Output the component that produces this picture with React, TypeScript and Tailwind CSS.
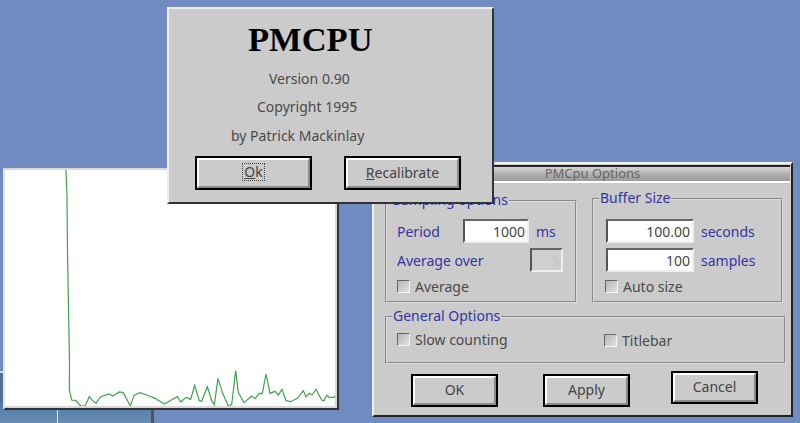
const RAW: [number, number][] = [
  [28, 90], [35, 120], [48, 122], [62, 138], [75, 138], [88, 110], [98, 122], [108, 130], [122, 110], [135, 106],
  [147, 102], [158, 108], [178, 96], [190, 98], [211, 138], [222, 106], [240, 98], [260, 105], [285, 115], [313, 132],
  [330, 122], [352, 110], [362, 126], [378, 112], [392, 118], [404, 76], [418, 122], [425, 124], [442, 80], [455, 122],
  [463, 134], [474, 55], [488, 100], [505, 138], [515, 134], [527, 32], [535, 98], [552, 128], [575, 108], [585, 116],
  [598, 100], [607, 100], [618, 42], [630, 100], [645, 94], [655, 105], [666, 88], [678, 122], [692, 125], [712, 115],
  [730, 92], [738, 110], [748, 100], [756, 105], [768, 88], [785, 120], [792, 122], [800, 106], [808, 112], [822, 112],
  [828, 104],
];

// svg origin is the inside of the graph window (5,170)
const tail = RAW.map(([x, y]) => `${60 + x / 3 - 5},${360 + y / 3 - 170}`).join(" ");
const points = `61,0 62,27 62.5,82 63.5,137 64.5,194 ${tail}`;

function RaisedButton({
  children,
  className = "",
}: {
  children: React.ReactNode;
  className?: string;
}) {
  return (
    <div className={`border-2 border-black bg-[#cbcbcb] ${className}`}>
      <div className="flex h-full items-center justify-center border-2 border-t-white border-l-white border-r-[#8a8a8a] border-b-[#8a8a8a] pb-0.5 text-[14px] text-[#444]">
        {children}
      </div>
    </div>
  );
}

function Field({
  value,
  className = "",
  disabled = false,
}: {
  value: string;
  className?: string;
  disabled?: boolean;
}) {
  return (
    <div
      className={`flex h-6 items-center justify-end border-2 border-t-[#666] border-l-[#555] border-r-[#eee] border-b-[#eee] pr-0.5 text-[14px] ${
        disabled ? "bg-[#cfcfcf] text-[#c4c4c4]" : "bg-white text-[#444]"
      } ${className}`}
    >
      {value}
    </div>
  );
}

function Check({ label, className = "" }: { label: string; className?: string }) {
  return (
    <div className={`flex items-center gap-[5px] text-[14px] text-[#4a4a4a] ${className}`}>
      <span className="h-[13px] w-[13px] border border-t-[#666] border-l-[#666] border-r-[#f4f4f4] border-b-[#f4f4f4] bg-gradient-to-br from-[#b8b8b8] to-[#e0e0e0]" />
      {label}
    </div>
  );
}

function Group({
  title,
  children,
  className = "",
}: {
  title: string;
  children: React.ReactNode;
  className?: string;
}) {
  return (
    <fieldset className={`min-w-0 shrink-0 border-2 border-[#dcdcdc] [border-style:groove] ${className}`}>
      <legend className="ml-[5px] h-[18px] px-px text-[14px] leading-[16px] text-[#3434a4]">{title}</legend>
      {children}
    </fieldset>
  );
}

export default function App() {
  return (
    <div className="relative h-[423px] w-[800px] overflow-hidden bg-[#6f8bbf] font-['Noto_Sans',sans-serif]">
      {/* other windows behind the graph */}
      <div className="absolute left-0 top-[371px] h-[40px] w-[4px] border-t-2 border-t-[#cfcfcf] bg-[#4f6f9f]" />
      <div className="absolute bottom-0 left-0 h-[20px] w-[154px] border-r-[3px] border-r-[#555] bg-gradient-to-b from-[#4f7aa6] to-[#6a8db3]">
        <div className="ml-[57px] h-full w-px bg-[#dfe7ef]" />
      </div>

      {/* graph window */}
      <div className="absolute left-[3px] top-[168px] h-[242px] w-[336px] border-2 border-t-[#d8d8d8] border-l-[#e4e4e4] border-r-[#333] border-b-[#333] bg-white">
        <svg width="332" height="238" className="absolute inset-0 border-r-2 border-b-2 border-[#d8d8d8]">
          <polyline points={points} fill="none" stroke="#3fa34d" strokeWidth="1.2" />
        </svg>
      </div>

      {/* options window */}
      <div className="absolute left-[372px] top-[162px] h-[255px] w-[421px] border-2 border-t-[#eee] border-l-[#eee] border-r-[#222] border-b-[#222] bg-[#cbcbcb] pl-[11px] pt-[1px]">
        <div className="-ml-[10px] mr-px flex h-[18px] items-center justify-center border-t-2 border-t-[#222] border-b-2 border-b-white bg-gradient-to-b from-[#d6d6d6] via-[#b0b0b0] to-[#9a9a9a] pl-[20px] text-[13px] text-[#666]">
          PMCpu Options
        </div>
        <div className="mt-[6px] flex items-start gap-[15px]">
          <Group title="Sampling options" className="mt-[3px] h-[111px] w-[192px]">
            <div className="flex items-center pl-[10px] pt-[9px] text-[14px] text-[#3434a4]">
              <span className="w-[66px]">Period</span>
              <Field value="1000" className="w-[66px]" />
              <span className="ml-[7px]">ms</span>
            </div>
            <div className="mt-[5px] flex items-center pl-[10px] text-[14px] text-[#3434a4]">
              <span className="w-[133px]">Average over</span>
              <Field value="3" disabled className="w-[33px]" />
            </div>
            <Check label="Average" className="mt-[4px] pl-[10px]" />
          </Group>
          <Group title="Buffer Size" className="mt-px h-[113px] w-[191px]">
            <div className="flex items-center pl-[12px] pt-[11px] text-[14px] text-[#3434a4]">
              <Field value="100.00" className="w-[88px]" />
              <span className="ml-[7px]">seconds</span>
            </div>
            <div className="mt-[5px] flex items-center pl-[12px] text-[14px] text-[#3434a4]">
              <Field value="100" className="w-[88px]" />
              <span className="ml-[7px]">samples</span>
            </div>
            <Check label="Auto size" className="mt-[4px] pl-[11px]" />
          </Group>
        </div>
        <Group title="General Options" className="mt-[5px] h-[56px] w-[401px]">
          <div className="flex items-center pl-[10px] pt-px">
            <Check label="Slow counting" className="w-[207px]" />
            <Check label="Titlebar" className="mt-[3px]" />
          </div>
        </Group>
        <div className="mt-[8px] flex items-start pl-[26px]">
          <RaisedButton className="mt-[2px] h-[33px] w-[87px]">OK</RaisedButton>
          <RaisedButton className="ml-[45px] mt-[2px] h-[33px] w-[87px]">Apply</RaisedButton>
          <RaisedButton className="ml-[41px] -mt-[1px] h-[33px] w-[87px]">Cancel</RaisedButton>
        </div>
      </div>

      {/* about dialog */}
      <div className="absolute left-[167px] top-[7px] h-[197px] w-[327px] border-2 border-t-[#eee] border-l-[#eee] border-r-[#333] border-b-[#333] bg-[#cbcbcb]">
        <div className="flex flex-col items-start text-[14px] text-[#4a4a4a]">
          <div className="ml-[79px] mt-[9px] font-['Liberation_Serif',serif] text-[34.5px] font-bold leading-[42px] text-black">
            PMCPU
          </div>
          <div className="ml-[100px] mt-[9px] leading-[20px]">Version 0.90</div>
          <div className="ml-[88px] mt-[8px] leading-[20px]">Copyright 1995</div>
          <div className="ml-[62px] mt-[9px] leading-[20px]">by Patrick Mackinlay</div>
          <div className="ml-[26px] mt-[10px] flex gap-[32px]">
            <RaisedButton className="h-[34px] w-[117px]">
              <span className="border border-dotted border-[#444] px-px leading-[16px]">
                <u>O</u>k
              </span>
            </RaisedButton>
            <RaisedButton className="h-[34px] w-[117px]">
              <span>
                <u>R</u>ecalibrate
              </span>
            </RaisedButton>
          </div>
        </div>
      </div>
    </div>
  );
}
